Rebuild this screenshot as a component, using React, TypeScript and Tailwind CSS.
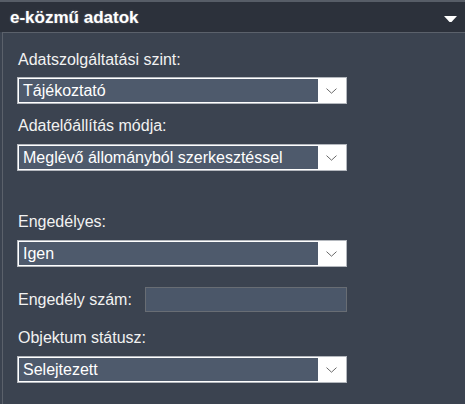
import React from "react";

const font = { fontFamily: '"Liberation Sans", Arial, sans-serif' };

function Chevron() {
  return (
    <svg width="11" height="6" viewBox="0 0 11 6" className="block">
      <polyline points="0.5,0.6 5.5,5.2 10.5,0.6" fill="none" stroke="#6a6a6a" strokeWidth="1" />
    </svg>
  );
}

function Select({ value }: { value: string }) {
  return (
    <div className="flex h-[27px] w-[330px] border border-[#b4b8be] bg-white p-[1px]">
      <div className="flex flex-1 items-center bg-[#4e5a6c] pl-[4px] text-[16px] leading-none text-white">
        {value}
      </div>
      <div className="flex w-[27px] items-center justify-center bg-white pt-[1px]">
        <Chevron />
      </div>
    </div>
  );
}

function Label({ children, className = "" }: { children: React.ReactNode; className?: string }) {
  return <p className={`ml-[1px] text-[16px] leading-[18px] text-[#f2f2f2] ${className}`}>{children}</p>;
}

export default function App() {
  return (
    <div className="h-[404px] w-[465px] overflow-hidden bg-[#3b4350]" style={font}>
      {/* fejléc */}
      <div className="flex h-[32px] items-center justify-between border-t-2 border-[#575d67] bg-[#2c313b] pl-[10px] pr-[8px]">
        <span className="text-[17px] font-bold leading-none text-white [text-shadow:0_0_2px_rgba(255,255,255,0.35)]">
          e-közmű adatok
        </span>
        <svg width="13" height="6" viewBox="0 0 13 6" className="mt-[3px] block">
          <polygon points="0,0 13,0 7.5,6 5.5,6" fill="#ffffff" />
        </svg>
      </div>

      {/* tartalom */}
      <div className="ml-[2px] h-full border-l border-t border-[#5b616b] pl-[14px] pt-[18px]">
        <Label>Adatszolgáltatási szint:</Label>
        <div className="mt-[8px]">
          <Select value="Tájékoztató" />
        </div>

        <Label className="mt-[13px]">Adatelőállítás módja:</Label>
        <div className="mt-[9px]">
          <Select value="Meglévő állományból szerkesztéssel" />
        </div>

        <Label className="mt-[42px]">Engedélyes:</Label>
        <div className="mt-[9px]">
          <Select value="Igen" />
        </div>

        <div className="mt-[20px] flex h-[25px] items-center">
          <Label className="w-[127px]">Engedély szám:</Label>
          <div className="h-[25px] w-[202px] border border-[#686d74] bg-[#4b5769]" />
        </div>

        <Label className="mt-[17px]">Objektum státusz:</Label>
        <div className="mt-[9px]">
          <Select value="Selejtezett" />
        </div>
      </div>
    </div>
  );
}
